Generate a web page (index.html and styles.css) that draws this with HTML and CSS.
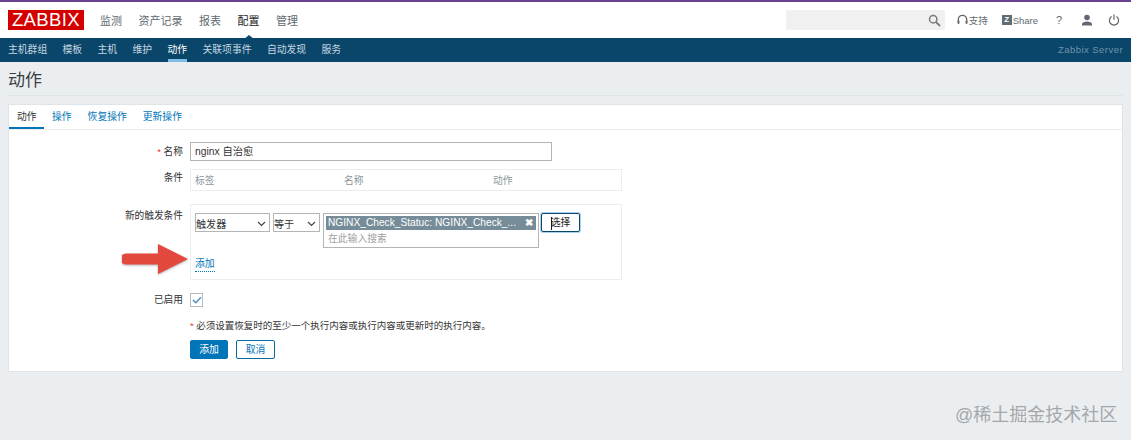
FILE: index.html
```html
<!DOCTYPE html>
<html lang="zh">
<head>
<meta charset="utf-8">
<title>动作</title>
<link rel="stylesheet" href="styles.css">
</head>
<body>
<header class="top">
  <div class="logo">ZABBIX</div>
  <nav class="mainnav">
    <a>监测</a><a>资产记录</a><a>报表</a><a class="on">配置</a><a>管理</a>
  </nav>
  <div class="tools">
    <div class="search">
      <svg class="ic" width="13" height="13" viewBox="0 0 13 13"><circle cx="5.2" cy="5.2" r="3.7" fill="none" stroke="#7b7b7b" stroke-width="1.5"/><path d="M8 8l4 4" stroke="#7b7b7b" stroke-width="1.8"/></svg>
    </div>
    <a class="tool support"><svg width="11" height="12" viewBox="0 0 11 12"><path d="M1.3 8V5.5a4.2 4.2 0 0 1 8.4 0V8" fill="none" stroke="#666" stroke-width="1.3"/><rect x="0.500" y="6.500" width="2" height="3.500" rx="1" fill="#666"/><rect x="8.500" y="6.500" width="2" height="3.500" rx="1" fill="#666"/></svg>支持</a>
    <a class="tool share"><span class="zbox">Z</span>Share</a>
    <a class="tool help">?</a>
    <a class="tool user"><svg width="12" height="12" viewBox="0 0 12 12"><circle cx="6" cy="3.500" r="2.800" fill="#667"/><path d="M1 11.500V10c0-1.600 2.500-2.600 5-2.600s5 1 5 2.600v1.500z" fill="#667"/></svg></a>
    <a class="tool power"><svg width="12" height="12" viewBox="0 0 12 12"><path d="M3.600 2.600a4.600 4.600 0 1 0 4.800 0" fill="none" stroke="#666" stroke-width="1.200"/><path d="M6 0.500v5.200" stroke="#666" stroke-width="1.200"/></svg></a>
  </div>
</header>
<nav class="subnav">
  <a>主机群组</a><a>模板</a><a>主机</a><a>维护</a><a class="on">动作</a><a>关联项事件</a><a>自动发现</a><a>服务</a>
  <span class="server">Zabbix Server</span>
</nav>
<h1 class="title">动作</h1>
<main class="card">
  <div class="tabs">
    <a class="on">动作</a><a>操作</a><a>恢复操作</a><a>更新操作</a>
  </div>
  <form class="form">
    <div class="lab name-lab"><span class="req">*</span> 名称</div>
    <div class="input">nginx 自治愈</div>

    <div class="lab cond-lab">条件</div>
    <div class="condtable"><span class="c1">标签</span><span class="c2">名称</span><span>动作</span></div>

    <div class="lab new-lab">新的触发条件</div>
    <div class="newbox">
      <div class="newrow">
        <div class="sel sel1">触发器<svg width="9" height="6" viewBox="0 0 9 6"><path d="M1 1l3.500 3.500L8 1" fill="none" stroke="#444" stroke-width="1.200"/></svg></div>
        <div class="sel sel2">等于<svg width="9" height="6" viewBox="0 0 9 6"><path d="M1 1l3.500 3.500L8 1" fill="none" stroke="#444" stroke-width="1.200"/></svg></div>
        <div class="multi">
          <div class="chip"><span>NGINX_Check_Statuc: NGINX_Check_...</span><b>✖</b></div>
          <div class="ph">在此输入搜索</div>
        </div>
        <div class="pick">选择</div>
      </div>
      <a class="addlink">添加</a>
    </div>

    <div class="lab en-lab">已启用</div>
    <div class="check"><svg width="10" height="8" viewBox="0 0 10 8"><path d="M1 4l2.800 2.800L9 1.200" fill="none" stroke="#4a90c0" stroke-width="1.400"/></svg></div>

    <div class="note"><span class="req">*</span> 必须设置恢复时的至少一个执行内容或执行内容或更新时的执行内容。</div>
    <div class="btns"><span class="btn primary">添加</span><span class="btn ghost">取消</span></div>
  </form>
  <svg class="arrow" width="68" height="32" viewBox="0 0 68 32"><path d="M4 9.500H36V0L66 15 36 30V20.500H4a5.500 5.500 0 0 1 0-11z" fill="#e2483d"/></svg>
</main>
<div class="mark">@稀土掘金技术社区</div>
</body>
</html>
```
FILE: styles.css
```css
* { box-sizing: border-box; }
html, body { height: 100%; }
body {
  margin: 0;
  height: 440px;
  overflow: hidden;
  position: relative;
  background: #ebeef0;
  color: #333;
  font-family: "Liberation Sans", "Noto Sans CJK SC", sans-serif;
  font-size: 10px;
}
a { display: block; }

.top {
  height: 38px;
  background: #fff;
  border-top: 2px solid #6b3f8e;
  display: flex;
  align-items: center;
  padding: 0 8px;
}
.logo {
  width: 76px;
  height: 20px;
  background: #d40000;
  color: #fff;
  font-size: 18.500px;
  line-height: 20px;
  text-align: center;
  letter-spacing: 0.4px;
}
.mainnav {
  display: flex;
  gap: 16.500px;
  margin-left: 16px;
  font-size: 11px;
  color: #5f6a70;
  position: relative;
}
.mainnav .on { color: #222; position: relative; }
.mainnav .on::after {
  content: "";
  position: absolute;
  left: 5px;
  bottom: -12px;
  border: 6px solid transparent;
  border-top: 0;
  border-bottom: 5px solid #0a466a;
}
.tools {
  margin-left: auto;
  display: flex;
  align-items: center;
  color: #5f6a70;
}
.search {
  width: 159px;
  height: 20px;
  background: #f0f0f0;
  display: flex;
  align-items: center;
  justify-content: flex-end;
  padding-right: 4px;
}
.tool { display: flex; align-items: center; white-space: nowrap; }
.support { margin-left: 12px; gap: 1px; font-size: 9.500px; }
.share { margin-left: 14px; font-size: 9.500px; }
.zbox {
  width: 10px;
  height: 10px;
  background: #5f6e76;
  color: #fff;
  font-size: 8px;
  font-weight: bold;
  line-height: 10px;
  text-align: center;
  margin-right: 1px;
}
.help { margin-left: 18px; font-size: 11px; width: 8px; }
.user { margin-left: 17px; }
.power { margin-left: 15px; margin-right: 3px; }

.subnav {
  height: 24px;
  background: #0a466a;
  color: #c5d6e0;
  display: flex;
  gap: 15.400px;
  padding: 0 8px;
  font-size: 9.800px;
  line-height: 23px;
}
.subnav .on { color: #fff; box-shadow: inset 0 -3px 0 #7fbde8; }
.server {
  margin-left: auto;
  color: #6f93ab;
  font-size: 9.500px;
  letter-spacing: 0.45px;
  line-height: 24px;
}

.title {
  margin: 0 8px;
  height: 34px;
  border-bottom: 1px solid #dfe4e7;
  font-size: 17px;
  font-weight: normal;
  line-height: 37px;
  color: #3a3f42;
}

.card {
  position: relative;
  margin: 8px 8px 0;
  height: 268px;
  background: #fff;
  border: 1px solid #dfe4e7;
}
.tabs {
  height: 25px;
  display: flex;
  border-bottom: 1px solid #ebeef0;
  font-size: 9.800px;
  line-height: 23px;
  color: #0275b8;
  white-space: nowrap;
}
.tabs a { padding: 0 8px; }
.tabs .on { color: #333; box-shadow: inset 0 -2px 0 #0275b8; width: 35px; }

.form {
  display: grid;
  grid-template-columns: 174px 432px;
  column-gap: 7px;
  padding-top: 12px;
  align-items: start;
}
.lab { text-align: right; font-size: 9.700px; line-height: 14px; }
.name-lab { padding-top: 3px; }
.req { color: #e33734; }

.input {
  width: 362px;
  height: 19px;
  border: 1px solid #b4b4b4;
  padding-left: 4px;
  line-height: 17px;
  font-size: 10.300px;
}
.condtable {
  margin-top: 8px;
  height: 22px;
  border: 1px solid #ebeef0;
  display: flex;
  padding-left: 4px;
  line-height: 21px;
  color: #8a959b;
  font-size: 9.800px;
}
.cond-lab { margin-top: 10px; }
.c1 { width: 149px; }
.c2 { width: 149px; }

.new-lab { margin-top: 18px; }
.newbox {
  margin-top: 13px;
  height: 76px;
  border: 1px solid #ebeef0;
  padding: 8px 4px 0;
  position: relative;
}
.newrow { display: flex; align-items: flex-start; }
.sel {
  height: 19px;
  border: 1px solid #b4b4b4;
  display: flex;
  align-items: center;
  justify-content: space-between;
  padding: 2px 3px 0 0;
  font-size: 10.100px;
  background: #fff;
}
.sel1 { width: 75px; }
.sel2 { width: 47px; margin-left: 3px; }
.multi {
  width: 216px;
  height: 35px;
  margin-left: 3px;
  border: 1px solid #b4b4b4;
  padding: 2px;
}
.chip {
  height: 14px;
  background: #768d99;
  color: #fff;
  display: flex;
  justify-content: space-between;
  padding: 0 3px 0 2px;
  font-size: 10.200px;
  line-height: 14px;
}
.chip b { font-size: 9.500px; }
.ph { color: #a0a0a0; font-size: 9.800px; line-height: 18px; padding-left: 2px; }
.pick {
  position: relative;
  width: 39px;
  height: 19px;
  margin-left: 2px;
  border: 1px solid #0a466a;
  border-radius: 2px;
  box-shadow: 0 0 0 1px #a9d2f0;
  text-align: center;
  line-height: 17px;
  font-size: 9.800px;
  color: #1a1a1a;
}
.pick::before {
  content: "";
  position: absolute;
  left: 9px;
  top: 3px;
  width: 1px;
  height: 13px;
  background: #1a1a1a;
}
.addlink {
  position: absolute;
  left: 4px;
  top: 52px;
  width: 20px;
  color: #0275b8;
  font-size: 9.800px;
  line-height: 14px;
  border-bottom: 1px dotted #0275b8;
}

.en-lab { margin-top: 13px; }
.check {
  margin-top: 13px;
  width: 13px;
  height: 14px;
  border: 1px solid #b4bcc2;
  display: flex;
  align-items: center;
  justify-content: center;
}
.note {
  grid-column: 2;
  margin-top: 12px;
  font-size: 9.500px;
  line-height: 14px;
  white-space: nowrap;
}
.btns {
  grid-column: 2;
  margin-top: 7px;
  display: flex;
  gap: 8px;
}
.btn {
  width: 38px;
  height: 19px;
  border-radius: 2px;
  text-align: center;
  line-height: 17px;
  font-size: 9.800px;
  border: 1px solid #0275b8;
}
.primary { background: #0275b8; color: #fff; }
.ghost { width: 39px; color: #0275b8; background: #fff; border-color: #0a6a9e; }

.arrow {
  position: absolute;
  left: 113px;
  top: 139px;
  filter: drop-shadow(0 1px 1px rgba(0, 0, 0, 0.3));
}
.mark {
  position: absolute;
  left: 955px;
  top: 402px;
  font-size: 18px;
  line-height: 26px;
  color: #a4a8ab;
  white-space: nowrap;
}
```
